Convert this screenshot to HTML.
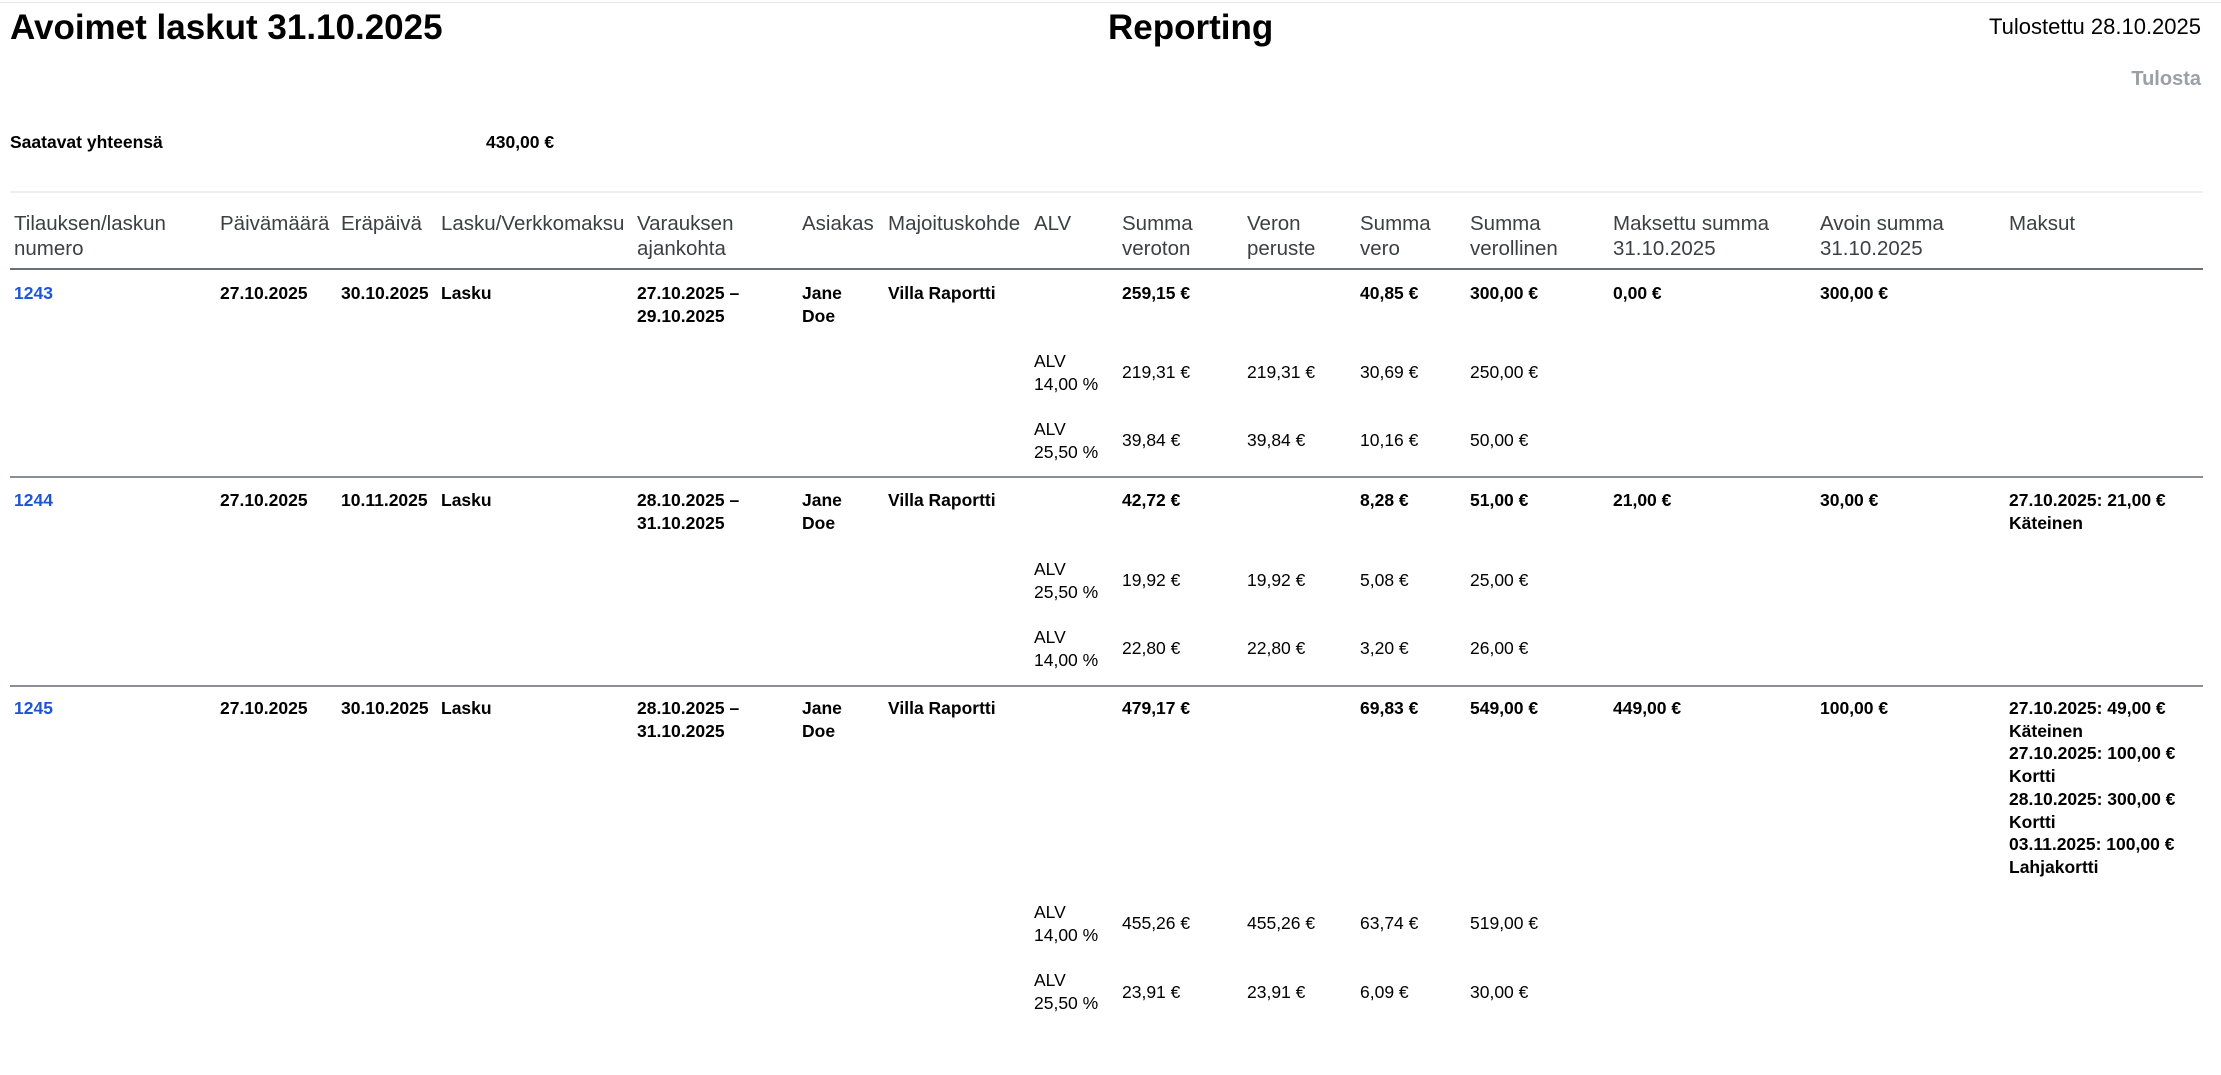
<!DOCTYPE html>
<html><head><meta charset="utf-8"><style>
*{margin:0;padding:0;box-sizing:border-box}
body{width:2221px;height:1075px;background:#fff;position:relative;overflow:hidden;font-family:"Liberation Sans",Arial,sans-serif;color:#000}
.a{position:absolute;white-space:nowrap}
.h1{font-size:35px;font-weight:bold;line-height:40px}
.b{font-size:17.5px;font-weight:bold;line-height:23px}
.n{font-size:17.5px;line-height:23px}
.hd{font-size:20.5px;line-height:25px;color:#3c4043}
.ln{position:absolute;left:10px;width:2193px}
.lk{color:#1a56db}
</style></head><body>
<div class="ln" style="top:2px;left:0;width:2221px;height:1px;background:#e5e7eb"></div>
<div class="a h1" style="left:10px;top:8px">Avoimet laskut 31.10.2025</div>
<div class="a h1" style="left:1108px;top:8px">Reporting</div>
<div class="a" style="right:20px;top:14px;font-size:22px;line-height:26px">Tulostettu 28.10.2025</div>
<div class="a" style="right:20px;top:67px;font-size:20px;line-height:24px;font-weight:bold;color:#9aa0a6">Tulosta</div>
<div class="a b" style="left:10px;top:131px">Saatavat yhteensä</div>
<div class="a b" style="left:486px;top:131px">430,00 €</div>
<div class="ln" style="top:191px;height:2px;background:#eceef1"></div>

<div class="a hd" style="left:14px;top:211px">Tilauksen/laskun<br>numero</div>
<div class="a hd" style="left:220px;top:211px">Päivämäärä</div>
<div class="a hd" style="left:341px;top:211px">Eräpäivä</div>
<div class="a hd" style="left:441px;top:211px">Lasku/Verkkomaksu</div>
<div class="a hd" style="left:637px;top:211px">Varauksen<br>ajankohta</div>
<div class="a hd" style="left:802px;top:211px">Asiakas</div>
<div class="a hd" style="left:888px;top:211px">Majoituskohde</div>
<div class="a hd" style="left:1034px;top:211px">ALV</div>
<div class="a hd" style="left:1122px;top:211px">Summa<br>veroton</div>
<div class="a hd" style="left:1247px;top:211px">Veron<br>peruste</div>
<div class="a hd" style="left:1360px;top:211px">Summa<br>vero</div>
<div class="a hd" style="left:1470px;top:211px">Summa<br>verollinen</div>
<div class="a hd" style="left:1613px;top:211px">Maksettu summa<br>31.10.2025</div>
<div class="a hd" style="left:1820px;top:211px">Avoin summa<br>31.10.2025</div>
<div class="a hd" style="left:2009px;top:211px">Maksut</div>
<div class="ln" style="top:268px;height:2px;background:#6b7078"></div>

<!-- Row 1 -->
<div class="a b lk" style="left:14px;top:282px">1243</div>
<div class="a b" style="left:220px;top:282px">27.10.2025</div>
<div class="a b" style="left:341px;top:282px">30.10.2025</div>
<div class="a b" style="left:441px;top:282px">Lasku</div>
<div class="a b" style="left:637px;top:282px">27.10.2025 –<br>29.10.2025</div>
<div class="a b" style="left:802px;top:282px">Jane<br>Doe</div>
<div class="a b" style="left:888px;top:282px">Villa Raportti</div>
<div class="a b" style="left:1122px;top:282px">259,15 €</div>
<div class="a b" style="left:1360px;top:282px">40,85 €</div>
<div class="a b" style="left:1470px;top:282px">300,00 €</div>
<div class="a b" style="left:1613px;top:282px">0,00 €</div>
<div class="a b" style="left:1820px;top:282px">300,00 €</div>
<div class="a n" style="left:1034px;top:350px">ALV<br>14,00 %</div>
<div class="a n" style="left:1122px;top:361px">219,31 €</div>
<div class="a n" style="left:1247px;top:361px">219,31 €</div>
<div class="a n" style="left:1360px;top:361px">30,69 €</div>
<div class="a n" style="left:1470px;top:361px">250,00 €</div>
<div class="a n" style="left:1034px;top:418px">ALV<br>25,50 %</div>
<div class="a n" style="left:1122px;top:429px">39,84 €</div>
<div class="a n" style="left:1247px;top:429px">39,84 €</div>
<div class="a n" style="left:1360px;top:429px">10,16 €</div>
<div class="a n" style="left:1470px;top:429px">50,00 €</div>
<div class="ln" style="top:476px;height:2px;background:#8a8f96"></div>

<!-- Row 2 -->
<div class="a b lk" style="left:14px;top:489px">1244</div>
<div class="a b" style="left:220px;top:489px">27.10.2025</div>
<div class="a b" style="left:341px;top:489px">10.11.2025</div>
<div class="a b" style="left:441px;top:489px">Lasku</div>
<div class="a b" style="left:637px;top:489px">28.10.2025 –<br>31.10.2025</div>
<div class="a b" style="left:802px;top:489px">Jane<br>Doe</div>
<div class="a b" style="left:888px;top:489px">Villa Raportti</div>
<div class="a b" style="left:1122px;top:489px">42,72 €</div>
<div class="a b" style="left:1360px;top:489px">8,28 €</div>
<div class="a b" style="left:1470px;top:489px">51,00 €</div>
<div class="a b" style="left:1613px;top:489px">21,00 €</div>
<div class="a b" style="left:1820px;top:489px">30,00 €</div>
<div class="a b" style="left:2009px;top:489px">27.10.2025: 21,00 €<br>Käteinen</div>
<div class="a n" style="left:1034px;top:558px">ALV<br>25,50 %</div>
<div class="a n" style="left:1122px;top:569px">19,92 €</div>
<div class="a n" style="left:1247px;top:569px">19,92 €</div>
<div class="a n" style="left:1360px;top:569px">5,08 €</div>
<div class="a n" style="left:1470px;top:569px">25,00 €</div>
<div class="a n" style="left:1034px;top:626px">ALV<br>14,00 %</div>
<div class="a n" style="left:1122px;top:637px">22,80 €</div>
<div class="a n" style="left:1247px;top:637px">22,80 €</div>
<div class="a n" style="left:1360px;top:637px">3,20 €</div>
<div class="a n" style="left:1470px;top:637px">26,00 €</div>
<div class="ln" style="top:685px;height:2px;background:#8a8f96"></div>

<!-- Row 3 -->
<div class="a b lk" style="left:14px;top:697px">1245</div>
<div class="a b" style="left:220px;top:697px">27.10.2025</div>
<div class="a b" style="left:341px;top:697px">30.10.2025</div>
<div class="a b" style="left:441px;top:697px">Lasku</div>
<div class="a b" style="left:637px;top:697px">28.10.2025 –<br>31.10.2025</div>
<div class="a b" style="left:802px;top:697px">Jane<br>Doe</div>
<div class="a b" style="left:888px;top:697px">Villa Raportti</div>
<div class="a b" style="left:1122px;top:697px">479,17 €</div>
<div class="a b" style="left:1360px;top:697px">69,83 €</div>
<div class="a b" style="left:1470px;top:697px">549,00 €</div>
<div class="a b" style="left:1613px;top:697px">449,00 €</div>
<div class="a b" style="left:1820px;top:697px">100,00 €</div>
<div class="a b" style="left:2009px;top:697px;line-height:22.7px">27.10.2025: 49,00 €<br>Käteinen<br>27.10.2025: 100,00 €<br>Kortti<br>28.10.2025: 300,00 €<br>Kortti<br>03.11.2025: 100,00 €<br>Lahjakortti</div>
<div class="a n" style="left:1034px;top:901px">ALV<br>14,00 %</div>
<div class="a n" style="left:1122px;top:912px">455,26 €</div>
<div class="a n" style="left:1247px;top:912px">455,26 €</div>
<div class="a n" style="left:1360px;top:912px">63,74 €</div>
<div class="a n" style="left:1470px;top:912px">519,00 €</div>
<div class="a n" style="left:1034px;top:969px">ALV<br>25,50 %</div>
<div class="a n" style="left:1122px;top:981px">23,91 €</div>
<div class="a n" style="left:1247px;top:981px">23,91 €</div>
<div class="a n" style="left:1360px;top:981px">6,09 €</div>
<div class="a n" style="left:1470px;top:981px">30,00 €</div>
</body></html>
